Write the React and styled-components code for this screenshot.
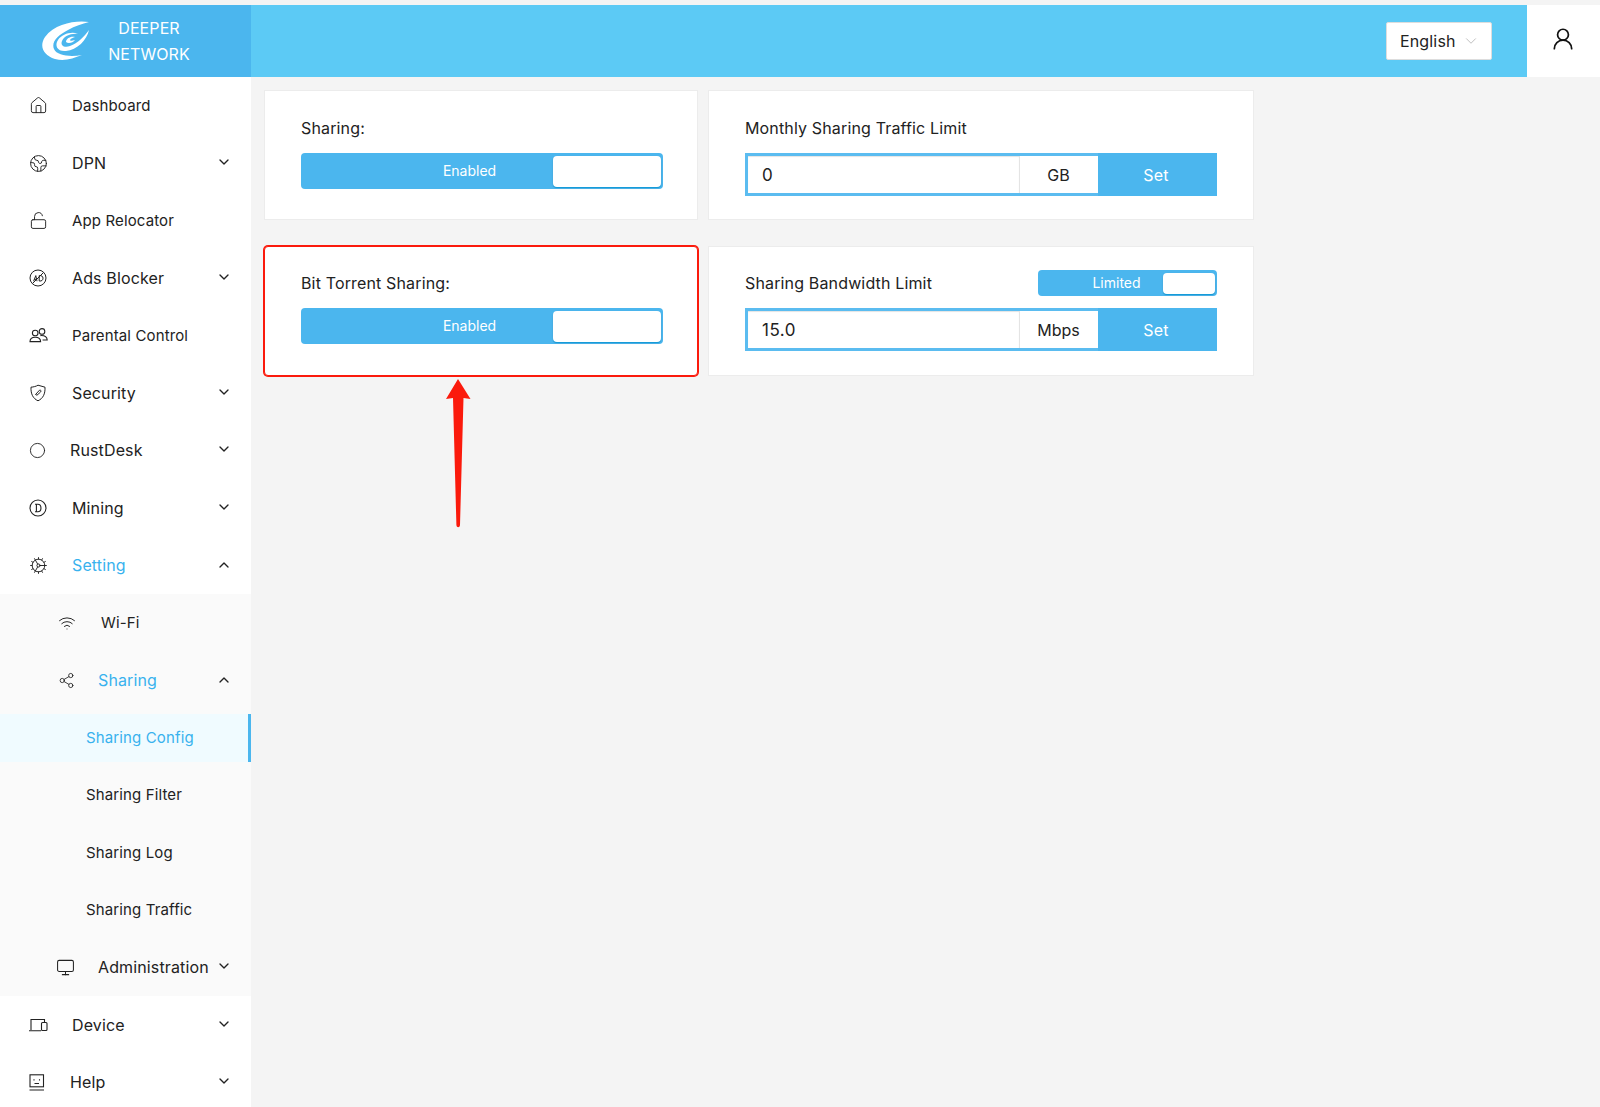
import React from 'react';
import styled, { createGlobalStyle } from 'styled-components';
import { ChevronDown, ChevronUp, Home, Earth, LockOpen, Cog, Wifi, Share2, Monitor, UserRound, Circle } from 'lucide-react';

const Global = createGlobalStyle`
  html, body { margin: 0; padding: 0; height: 100%; overflow: hidden; background: #f4f4f4; }
  body { font-family: Inter, "Noto Sans", "Liberation Sans", sans-serif; color: #222; }
  * { box-sizing: border-box; }
`;

const Page = styled.div`
  width: 1600px;
  height: 1107px;
  padding-top: 5px;
  display: flex;
  flex-direction: column;
  position: relative;
  overflow: hidden;
`;

const Header = styled.header`
  height: 72px;
  flex: none;
  display: flex;
  background: #5ccaf5;
`;

const Brand = styled.div`
  width: 251px;
  background: #4bb6ee;
  display: flex;
  align-items: center;
  padding-left: 41px;
  color: #fff;
`;

const BrandName = styled.div`
  width: 120px;
  text-align: center;
  font-size: 16px;
  line-height: 26.5px;
  letter-spacing: 0.1px;
`;

const HeaderRight = styled.div`
  flex: 1;
  display: flex;
  justify-content: flex-end;
  align-items: center;
  padding-right: 35px;
`;

const LangSelect = styled.div`
  width: 106px;
  height: 38px;
  background: #fff;
  border: 1px solid #ddd;
  border-radius: 2px;
  display: flex;
  align-items: center;
  gap: 6px;
  padding-left: 13px;
  font-size: 16px;
  letter-spacing: 0.15px;
  color: #222;
`;

const UserBox = styled.div`
  width: 73px;
  background: #fff;
  display: flex;
  align-items: center;
  justify-content: center;
  padding: 0 1px 4px 0;
`;

const Body = styled.div`
  flex: 1;
  display: flex;
  min-height: 0;
`;

const Sidebar = styled.nav`
  width: 251px;
  flex: none;
  background: #fff;
  display: flex;
  flex-direction: column;
`;

const Row = styled.div`
  height: 48px;
  margin: 4.72px 0;
  flex: none;
  display: flex;
  align-items: center;
  position: relative;
  padding-left: ${p => p.$indent}px;
  background: ${p => (p.$selected ? '#f0fbff' : 'transparent')};
  color: ${p => (p.$active ? '#38b2ee' : '#222')};
  font-size: ${p => (p.$small ? 15 : 16)}px;
  letter-spacing: 0.13px;
  ${p => p.$selected && 'border-right: 3px solid #4bb6ee;'}
`;

const IconSlot = styled.span`
  width: ${p => p.$width}px;
  flex: none;
  display: flex;
  align-items: center;
  color: #222;
`;

const Caret = styled.span`
  position: absolute;
  left: 216px;
  top: 50%;
  margin-top: ${p => (p.$open ? -8 : -9)}px;
  height: 16px;
  display: flex;
  color: #222;
`;

const SubMenu = styled.div`
  background: #fafafa;
  display: flex;
  flex-direction: column;
`;

const Main = styled.main`
  flex: 1;
  padding: 13px 0 0 13px;
  display: grid;
  grid-template-columns: 434px 546px;
  grid-auto-rows: 130px;
  column-gap: 10px;
  row-gap: 26px;
  align-content: start;
`;

const Card = styled.section`
  background: #fff;
  border: 1px solid ${p => (p.$flagged ? '#fb1a0c' : '#ececec')};
  border-radius: ${p => (p.$flagged ? 4 : 0)}px;
  box-shadow: ${p => (p.$flagged ? '0 0 0 1px #fb1a0c' : 'none')};
  padding: ${p => (p.$lower ? 25 : 26)}px 36px 0 36px;
`;

const CardHead = styled.div`
  height: 22px;
  margin-bottom: 14px;
  display: flex;
  align-items: center;
  justify-content: space-between;
  font-size: 16px;
  letter-spacing: 0.15px;
  color: #222;
`;

const Toggle = styled.div`
  width: ${p => p.$width}px;
  height: ${p => p.$height}px;
  flex: none;
  display: flex;
  align-items: stretch;
  background: #4bb6ee;
  border-radius: 4px;
  padding: 3px 2px 2px 2px;
  color: #fff;
  font-size: 14px;
  letter-spacing: 0;
`;

const ToggleLabel = styled.span`
  flex: 1;
  display: flex;
  align-items: center;
  justify-content: center;
  padding-left: ${p => p.$pad}px;
  padding-bottom: 2px;
`;

const Knob = styled.span`
  width: ${p => p.$width}px;
  background: #fff;
  border-radius: 4px;
  box-shadow: 0 1px 0 #169bd8, 0 1px 2px rgba(0, 0, 0, 0.15);
`;

const InputGroup = styled.div`
  width: 472px;
  height: 43px;
  display: flex;
  border: 3px solid #5bbcf0;
  background: #fff;
`;

const ValueInput = styled.input`
  flex: 1;
  min-width: 0;
  border: none;
  border-right: 1px solid #e4e4e4;
  box-shadow: inset 0 1px 1px #e4e4e4;
  outline: none;
  padding: 0 0 0 14px;
  font: inherit;
  font-size: 17px;
  letter-spacing: 0.5px;
  color: #222;
`;

const Unit = styled.span`
  width: 78px;
  flex: none;
  display: flex;
  align-items: center;
  justify-content: center;
  font-size: 16px;
  padding-right: 1px;
`;

const SetButton = styled.button`
  width: 119px;
  flex: none;
  margin: -3px -3px -3px 0;
  padding: 0 3px 0 0;
  border: none;
  background: #4bb6ee;
  color: #fff;
  font: inherit;
  font-size: 16px;
  letter-spacing: 0.2px;
`;

const Arrow = styled.svg`
  position: absolute;
  left: 441px;
  top: 378px;
`;

const Swirl = () => (
  <svg width="48" height="42" viewBox="0 0 48 42" fill="#fff">
    <path d="M48 2C36 0 14 3 4 17-2 26 2 35 14 39 24 42 32 38 41 35 30 37 16 36 13 29 10 22 17 15 27 10 34 6 41 4 48 2Z" />
    <path d="M48 10C46 20 36 30 25 31 17 32 13 26 17 20 21 14 31 11 37 14 30 13 23 16 21 21 19 26 24 28 29 26 37 23 43 17 48 10Z" />
    <path d="M34 17C29 16 25 19 25 22 27 24 32 23 34 20 31 21 29 21 29 20 30 18 32 18 34 17Z" />
  </svg>
);

const AdsIcon = () => (
  <svg width="18" height="18" viewBox="0 0 18 18" fill="none" stroke="#222" strokeWidth="1">
    <circle cx="9" cy="9" r="8" />
    <path d="M3.5 14.5 14.5 3.5" />
    <path d="M4.6 12.2 6.8 6.6 8 12.2M5.4 10.4H7.8" />
    <path d="M10.2 6.6V12C13 12.4 14 10.8 14 9.2 14 7.4 12.6 6.3 10.2 6.6Z" />
  </svg>
);

const PeopleIcon = () => (
  <svg width="19" height="15" viewBox="0 0 19 15" fill="none" stroke="#222" strokeWidth="1.1">
    <circle cx="6.2" cy="5" r="2.8" />
    <circle cx="13" cy="3.4" r="2.8" />
    <path d="M1 13.6C1 10.4 3.4 9.2 6.2 9.2 9 9.2 11.6 10.4 11.6 13.6ZM11.4 7.6C15 7.4 18 8.6 18.2 12H13.6" />
  </svg>
);

const ShieldIcon = () => (
  <svg width="18" height="18" viewBox="0 0 18 18" fill="none" stroke="#222" strokeWidth="1">
    <path d="M9 1.2 16 3.2C16.3 10 14 14.5 9 16.8 4 14.5 1.7 10 2 3.2 4.5 3 7 2.4 9 1.2Z" />
    <path d="M6.5 10.5 10.5 6.2C12 5.8 12.3 7 11.6 8L8 11.2Z" />
  </svg>
);

const MiningIcon = () => (
  <svg width="18" height="18" viewBox="0 0 18 18" fill="none" stroke="#222" strokeWidth="1.1">
    <circle cx="9" cy="9" r="8" />
    <path d="M6 5.2H8.8C13 5.2 13 12.8 8.8 12.8H6M7.4 5.2V12.8" />
  </svg>
);

const DeviceIcon = () => (
  <svg width="19" height="14" viewBox="0 0 19 14" fill="none" stroke="#222" strokeWidth="1.1">
    <path d="M2 12V1.5H15.5V4M0 12.8H12" />
    <rect x="12.5" y="4.5" width="5.5" height="8" rx="1" />
  </svg>
);

const FaceIcon = () => (
  <svg width="16" height="17" viewBox="0 0 16 17" fill="none" stroke="#222" strokeWidth="1.1">
    <rect x="1" y="0.8" width="13.5" height="12" />
    <path d="M0.5 16H15M5 5.2V6.4M10.5 5.2V6.4M5.5 9.5H10" />
  </svg>
);

const line = { size: 19, strokeWidth: 1.2 };

const Item = ({ icon, label, indent = 29, slot = 43, small, open, caret, active, selected }) => (
  <Row $indent={indent} $small={small} $active={active} $selected={selected}>
    {icon && <IconSlot $width={slot}>{icon}</IconSlot>}
    {label}
    {caret && (
      <Caret $open={open}>{open ? <ChevronUp size={16} strokeWidth={2} /> : <ChevronDown size={16} strokeWidth={2} />}</Caret>
    )}
  </Row>
);

const BigToggle = () => (
  <Toggle $width={362} $height={36}>
    <ToggleLabel $pad={83}>Enabled</ToggleLabel>
    <Knob $width={108} />
  </Toggle>
);

const LimitGroup = ({ value, unit }) => (
  <InputGroup>
    <ValueInput defaultValue={value} />
    <Unit>{unit}</Unit>
    <SetButton>Set</SetButton>
  </InputGroup>
);

export default function App() {
  return (
    <Page>
      <Global />
      <Header>
        <Brand>
          <Swirl />
          <BrandName>DEEPER<br />NETWORK</BrandName>
        </Brand>
        <HeaderRight>
          <LangSelect>
            English
            <ChevronDown size={18} strokeWidth={1} color="#aaa" />
          </LangSelect>
        </HeaderRight>
        <UserBox>
          <UserRound size={26} strokeWidth={1.6} color="#111" />
        </UserBox>
      </Header>
      <Body>
        <Sidebar>
          <Item small icon={<Home {...line} />} label="Dashboard" />
          <Item caret icon={<Earth {...line} />} label="DPN" />
          <Item small icon={<LockOpen {...line} />} label="App Relocator" />
          <Item caret icon={<AdsIcon />} label="Ads Blocker" />
          <Item small icon={<PeopleIcon />} label="Parental Control" />
          <Item caret icon={<ShieldIcon />} label="Security" />
          <Item caret slot={41} icon={<Circle size={17} strokeWidth={1.3} />} label="RustDesk" />
          <Item caret icon={<MiningIcon />} label="Mining" />
          <Item caret open active icon={<Cog {...line} />} label="Setting" />
          <SubMenu>
            <Item small indent={58} slot={43} icon={<Wifi size={18} strokeWidth={1.3} />} label="Wi-Fi" />
            <Item caret open active indent={58} slot={40} icon={<Share2 size={17} strokeWidth={1.2} />} label="Sharing" />
            <Item small active selected indent={86} label="Sharing Config" />
            <Item small indent={86} label="Sharing Filter" />
            <Item small indent={86} label="Sharing Log" />
            <Item small indent={86} label="Sharing Traffic" />
            <Item caret indent={56} slot={42} icon={<Monitor size={19} strokeWidth={1.3} />} label="Administration" />
          </SubMenu>
          <Item caret icon={<DeviceIcon />} label="Device" />
          <Item caret slot={41} icon={<FaceIcon />} label="Help" />
        </Sidebar>
        <Main>
          <Card>
            <CardHead>Sharing:</CardHead>
            <BigToggle />
          </Card>
          <Card>
            <CardHead>Monthly Sharing Traffic Limit</CardHead>
            <LimitGroup value="0" unit="GB" />
          </Card>
          <Card $flagged $lower>
            <CardHead>Bit Torrent Sharing:</CardHead>
            <BigToggle />
          </Card>
          <Card $lower>
            <CardHead>
              Sharing Bandwidth Limit
              <Toggle $width={179} $height={26}>
                <ToggleLabel $pad={30}>Limited</ToggleLabel>
                <Knob $width={52} />
              </Toggle>
            </CardHead>
            <LimitGroup value="15.0" unit="Mbps" />
          </Card>
        </Main>
      </Body>
      <Arrow width="34" height="152" viewBox="0 0 34 152">
        <path d="M17 1 29.5 21 22.5 20 19 147C18.8 150 15.6 150 15.4 147L12 20 5 21Z" fill="#fb1a0c" />
      </Arrow>
    </Page>
  );
}
